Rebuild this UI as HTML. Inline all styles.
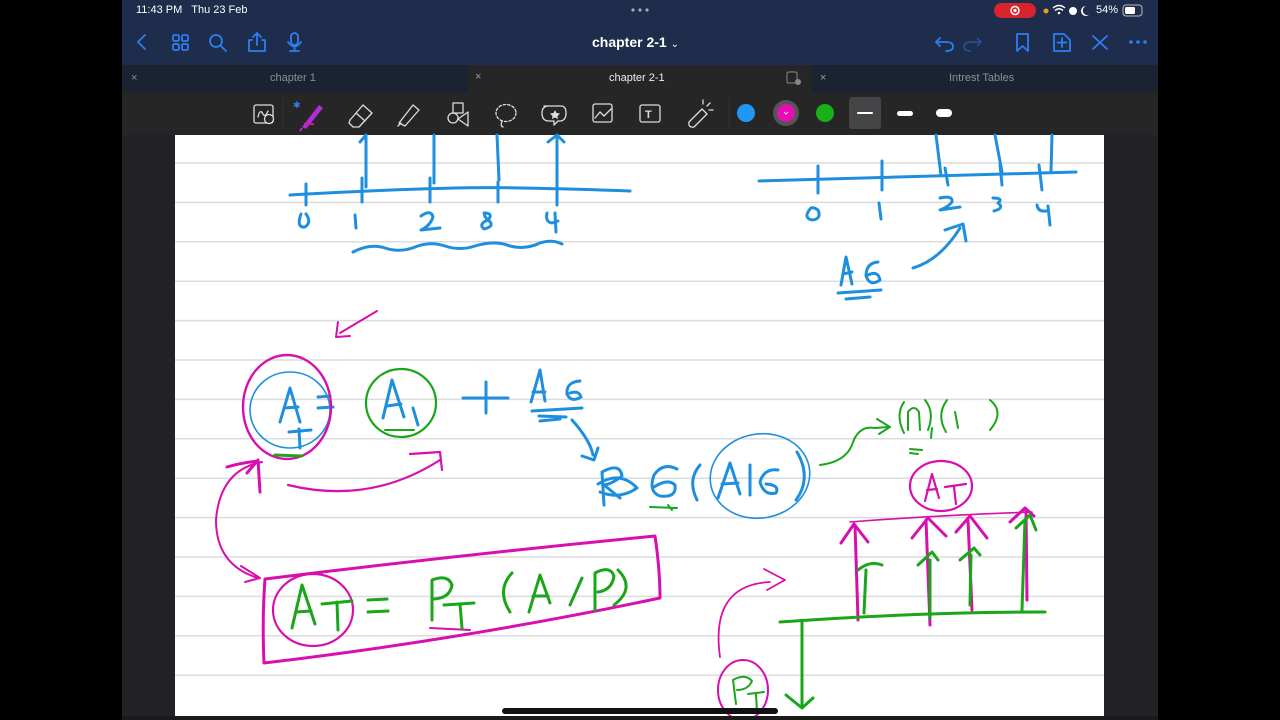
<!DOCTYPE html>
<html><head><meta charset="utf-8"><style>
*{margin:0;padding:0;box-sizing:border-box}
body{width:1280px;height:720px;background:#000;position:relative;overflow:hidden;font-family:"Liberation Sans",sans-serif}
#ipad{position:absolute;left:122px;top:0;width:1036px;height:720px;background:#222226}
#top{position:absolute;left:0;top:0;width:1036px;height:65px;background:#1d2d4b}
.t{position:absolute;color:#fff;white-space:nowrap}
#tabs{position:absolute;left:0;top:65px;width:1036px;height:27px;background:#1b2232}
#atab{position:absolute;left:346px;top:65px;width:344px;height:27px;background:#262626}
#tool{position:absolute;left:0;top:92px;width:1036px;height:43px;background:#262626}
#paper{position:absolute;left:175px;top:135px;width:929px;height:581px;background:#fff}
</style></head><body>
<div id="ipad">
<div id="top"></div>
<div id="tabs"></div><div id="atab"></div>
<div id="tool"></div>
</div>
<div class="t" style="left:136px;top:4px;font-size:11px">11:43 PM&nbsp;&nbsp; Thu 23 Feb</div>
<div class="t" style="left:592px;top:34px;font-size:14px;font-weight:bold">chapter 2-1 <span style="font-size:10px;font-weight:normal">⌄</span></div>
<div class="t" style="left:1096px;top:4px;font-size:11px">54%</div>
<div class="t" style="left:270px;top:72px;font-size:11px;color:#8a8f99">chapter 1</div>
<div class="t" style="left:131px;top:72px;font-size:11px;color:#8a8f99">×</div>
<div class="t" style="left:475px;top:71px;font-size:11px;color:#999">×</div>
<div class="t" style="left:609px;top:72px;font-size:11px;color:#eee">chapter 2-1</div>
<div class="t" style="left:820px;top:72px;font-size:11px;color:#999">×</div>
<div class="t" style="left:949px;top:72px;font-size:11px;color:#8a8f99">Intrest Tables</div>
<svg style="position:absolute;left:0;top:0" width="1280" height="135" viewBox="0 0 1280 135">
<g fill="#aaa"><circle cx="633" cy="10" r="1.6"/><circle cx="640" cy="10" r="1.6"/><circle cx="647" cy="10" r="1.6"/></g>
<rect x="994" y="3" width="42" height="15" rx="7.5" fill="#d9242e"/><circle cx="1015" cy="10.5" r="4" fill="none" stroke="#fff" stroke-width="1.5"/><circle cx="1015" cy="10.5" r="1.6" fill="#fff"/>
<circle cx="1046" cy="11" r="2.5" fill="#f29a1e"/>
<path d="M1053 8 Q1059 3 1065 8 M1055 10.5 Q1059 7 1063 10.5" stroke="#fff" stroke-width="1.4" fill="none"/><circle cx="1059" cy="13" r="1.3" fill="#fff"/>
<circle cx="1073" cy="11" r="4" fill="#fff"/><path d="M1086 6 A5 5 0 1 0 1089 15 A4 4 0 0 1 1086 6Z" fill="#fff"/>
<rect x="1123" y="5" width="19" height="11" rx="3" fill="none" stroke="#bbb" stroke-width="1"/><rect x="1125" y="7" width="10" height="7" rx="1.5" fill="#fff"/>
<g stroke="#2d7ff0" stroke-width="1.8" fill="none" stroke-linecap="round" stroke-linejoin="round">
<path d="M145 35 L138 42 L145 49"/>
<rect x="173" y="35" width="6" height="6" rx="1.5"/><rect x="182" y="35" width="6" height="6" rx="1.5"/><rect x="173" y="44" width="6" height="6" rx="1.5"/><rect x="182" y="44" width="6" height="6" rx="1.5"/>
<circle cx="216" cy="41" r="6"/><path d="M220.5 45.5 L226 51"/>
<path d="M252 40 H249 V51 H265 V40 H262 M257 45 V33 M253 37 L257 33 L261 37"/>
<rect x="291" y="33" width="7" height="12" rx="3.5"/><path d="M288 42 Q294.5 51 301 42 M294.5 47 V51 M290 51 H299"/>
<path d="M940 38 L936 42 L940 46 M936 42 H946 Q953 42 953 46.5 Q953 51 946 51"/>
<path d="M1017 34 H1028 V51 L1022.5 46 L1017 51Z"/>
<path d="M1054 34 H1064 L1070 40 V51 H1054Z M1062 38 V47 M1057.5 42.5 H1066.5"/>
<path d="M1093 36 L1107 49 M1107 36 L1093 49"/>
</g>
<path d="M977 38 L981 42 L977 46 M981 42 H971 Q964 42 964 46.5 Q964 51 971 51" stroke="#22508f" stroke-width="1.8" fill="none"/>
<g fill="#2d7ff0"><circle cx="1131" cy="42" r="1.8"/><circle cx="1138" cy="42" r="1.8"/><circle cx="1145" cy="42" r="1.8"/></g>
<rect x="787" y="72" width="10" height="11" rx="1.5" fill="none" stroke="#888" stroke-width="1"/><circle cx="798" cy="82" r="3" fill="#888"/>
<line x1="283" y1="98" x2="283" y2="130" stroke="#333"/><line x1="729" y1="98" x2="729" y2="130" stroke="#333"/>
<g stroke="#ddd" stroke-width="1.3" fill="none" stroke-linecap="round" stroke-linejoin="round">
<rect x="254" y="105" width="19" height="18" rx="2"/><circle cx="269" cy="119" r="4.5" fill="#262626"/><path d="M258 117 Q260 108 263 114 Q265 118 268 111"/>
<path d="M350 120 L363 105 L372 113 L359 127 L353 127 L349 123Z M356 113 L365 121"/>
<path d="M399 123 L413 105 L419 110 L405 126Z M398 126 L401 123"/>
<rect x="453" y="103" width="10" height="10"/><circle cx="453" cy="118" r="5"/><path d="M468 112 L468 126 L458 119Z"/>
<ellipse cx="506" cy="113" rx="10" ry="8.5" stroke-dasharray="2.5 2"/><path d="M502 121 Q500 126 503 127"/>
<path d="M544 106 H561 Q566 106 566 113 Q566 120 561 121 H558 L554 125 V121 H549 Q542 121 542 113 Q542 106 549 106"/>
<rect x="593" y="104" width="19" height="18" rx="2"/><path d="M595 118 L600 112 L604 116 L611 109"/>
<rect x="640" y="105" width="20" height="17" rx="2"/>
<path d="M689 122 L702 109 L707 114 L694 127 Q688 128 689 122Z M703 104 V100 M707 106 L710 103 M709 110 H713"/>
</g>
<path d="M555 110 L556.5 113 L560 113.5 L557.5 116 L558 119 L555 117.5 L552 119 L552.5 116 L550 113.5 L553.5 113Z" fill="#ddd"/>
<text x="645" y="118" font-family="Liberation Sans" font-size="11" font-weight="bold" fill="#ddd">T</text>
<path d="M302 127 L319 105 L323 108 L306 129Z" fill="#b02ed6"/><path d="M302 128 L300 131" stroke="#b02ed6" stroke-width="2"/><rect x="304" y="123" width="10" height="2" fill="#d419b0"/>
<text x="293" y="108" font-size="9" fill="#2d7ff0" font-family="DejaVu Sans">✱</text>
<circle cx="746" cy="113" r="9" fill="#2196f3"/>
<circle cx="786" cy="113" r="13" fill="#555"/><circle cx="786" cy="113" r="9" fill="#e40fb3"/><path d="M784 112 L786 114 L788 112" stroke="#fff" fill="none" stroke-width="0.8"/>
<circle cx="825" cy="113" r="9" fill="#19b019"/>
<rect x="849" y="97" width="32" height="32" rx="3" fill="#454548"/>
<rect x="857" y="112" width="16" height="2" rx="1" fill="#fff"/>
<rect x="897" y="111" width="16" height="5" rx="2.5" fill="#fff"/>
<rect x="936" y="109" width="16" height="8" rx="4" fill="#fff"/>
</svg>
<div id="paper"></div>
<svg style="position:absolute;left:0;top:0" width="1280" height="720" viewBox="0 0 1280 720">
<g stroke="#dcdcdc" stroke-width="1.5">
<line x1="175" y1="163" x2="1104" y2="163"/><line x1="175" y1="202.4" x2="1104" y2="202.4"/><line x1="175" y1="241.8" x2="1104" y2="241.8"/><line x1="175" y1="281.2" x2="1104" y2="281.2"/><line x1="175" y1="320.6" x2="1104" y2="320.6"/><line x1="175" y1="360" x2="1104" y2="360"/><line x1="175" y1="399.4" x2="1104" y2="399.4"/><line x1="175" y1="438.8" x2="1104" y2="438.8"/><line x1="175" y1="478.2" x2="1104" y2="478.2"/><line x1="175" y1="517.6" x2="1104" y2="517.6"/><line x1="175" y1="557" x2="1104" y2="557"/><line x1="175" y1="596.4" x2="1104" y2="596.4"/><line x1="175" y1="635.8" x2="1104" y2="635.8"/><line x1="175" y1="675.2" x2="1104" y2="675.2"/>
</g>
<g fill="none" stroke-linecap="round" stroke-linejoin="round">
<g stroke="#1e8fde" stroke-width="3">
<path d="M290 195 Q450 186 520 188 Q580 189 630 191"/>
<path d="M306 184 V205 M362 178 V202 M430 178 V202 M498 182 V202 M557 182 V205"/>
<path d="M366 187 V135 M434 183 V135 M499 180 L497 135 M557 187 V135 M360 142 L366 135 M548 142 L557 135 L564 142"/>
<path d="M301 214 Q296 228 305 227 Q312 222 306 214"/><path d="M355 215 L356 228"/>
<path d="M421 216 Q431 209 433 217 Q430 226 421 230 L440 228"/>
<path d="M484 213 Q494 213 488 220 Q496 226 484 229 Q478 224 488 220 Q482 214 486 213"/>
<path d="M547 213 Q545 222 552 223 L558 221 M555 213 L556 232"/>
<path d="M353 252 Q370 243 385 248 Q400 253 415 247 Q430 241 445 246 Q460 251 475 246 Q495 240 510 246 Q525 250 540 243 Q552 239 562 244"/>
<path d="M759 181 Q900 177 1076 172"/>
<path d="M818 166 V193 M882 161 V190 M945 168 L948 185 M1000 164 L1002 185 M1039 165 L1042 190"/>
<path d="M936 135 L941 175 M995 135 L1002 172 M1052 135 L1051 172"/>
<path d="M810 209 Q803 218 812 220 Q822 219 818 210 Q812 206 810 209"/><path d="M879 203 L881 219"/>
<path d="M940 198 Q953 195 952 202 Q948 207 940 210 L960 207"/>
<path d="M993 198 Q1004 198 998 203 Q1005 208 994 211"/>
<path d="M1037 205 Q1038 212 1046 211 M1048 206 L1050 225"/>
<path d="M913 268 Q940 260 960 228 M945 230 L963 224 L966 241"/>
<path d="M841 285 L846 257 L852 284 M843 274 L852 272 M878 262 Q866 263 866 276 Q870 287 880 280 Q878 270 868 275"/>
<path d="M838 293 L881 290 M846 299 L870 297"/>
<ellipse cx="290" cy="410" rx="40" ry="38" stroke-width="1.6"/>
<path d="M280 422 L290 388 L300 422 M284 408 L298 407 M289 432 L311 430 M299 429 L300 448"/>
<path d="M318 397 L330 396 M318 408 L333 407"/>
<path d="M383 418 L392 380 L404 417 M387 406 L401 404 M413 408 L418 425"/>
<path d="M463 398 L508 398 M486 382 L486 413"/>
<path d="M531 402 L540 370 L545 401 M533 392 L545 392 M580 381 Q566 382 567 394 Q571 403 581 397 Q579 390 570 393"/>
<path d="M532 411 L582 408 M539 416 L566 417 M540 421 L560 419"/>
<path d="M572 420 Q590 440 593 455 M582 456 L594 460 L598 448"/>
<path d="M604 505 L602 472 Q620 462 622 476 Q612 484 604 485 L620 498 M598 484 Q620 470 637 488 Q620 500 600 492"/>
<path d="M677 469 Q663 462 654 475 Q648 492 660 496 Q677 498 675 485 Q668 478 654 487"/>
<path d="M700 465 Q687 480 697 500"/>
<path d="M718 498 L730 463 L740 494 M722 484 L738 483"/>
<path d="M750 465 L750 495 M778 470 Q764 468 760 482 Q764 496 776 493 Q780 485 766 484"/>
<path d="M797 452 Q812 478 796 500"/>
<ellipse cx="760" cy="476" rx="50" ry="42" stroke-width="1.6" transform="rotate(-10 760 476)"/>
</g>
<g stroke="#d60fae" stroke-width="3">
<path d="M377 311 L340 333 M338 322 L336 337 L350 336" stroke-width="2"/>
<ellipse cx="287" cy="407" rx="44" ry="52" stroke-width="2.4"/>
<path d="M227 467 Q240 463 258 461 M247 473 L258 460 L260 492"/>
<path d="M262 462 Q220 470 216 520 Q216 565 258 578 M241 566 L260 578 L245 582" stroke-width="2"/>
<path d="M288 485 Q370 505 440 460 M410 454 L440 452 L442 470" stroke-width="2.2"/>
<path d="M265 579 Q460 555 655 536 Q660 570 660 598 Q460 640 264 663 Q262 620 265 579Z" stroke-width="3"/>
<ellipse cx="313" cy="610" rx="40" ry="36" stroke-width="2.2"/>
<path d="M430 628 L470 630" stroke-width="2"/>
<ellipse cx="941" cy="486" rx="31" ry="25" stroke-width="2.2"/>
<path d="M925 501 L932 474 L939 498 M927 490 L937 489 M945 487 L966 484 M954 487 L956 504" stroke-width="2.2"/>
<path d="M850 522 Q940 515 1032 512" stroke-width="1.6"/>
<path d="M858 620 L855 525 M841 543 L854 524 L868 542"/>
<path d="M930 625 L926 520 M912 538 L928 518 L946 536"/>
<path d="M972 610 L968 520 M956 532 L970 516 L987 538"/>
<path d="M1027 600 L1026 510 M1010 522 L1025 508 L1034 516"/>
<path d="M720 657 Q710 585 770 582 M764 569 L785 580 L767 590" stroke-width="1.8"/>
<ellipse cx="743" cy="690" rx="25" ry="30" stroke-width="2"/>
</g>
<g stroke="#1aa51a" stroke-width="3">
<ellipse cx="401" cy="403" rx="35" ry="34" stroke-width="2.2"/>
<path d="M385 430 L414 430" stroke-width="2"/>
<path d="M275 455 L302 456"/>
<path d="M650 507 L677 508 M668 505 L672 510" stroke-width="2"/>
<path d="M820 465 Q845 462 852 445 Q858 425 875 428 L888 427 M877 419 L890 427 L879 434" stroke-width="2"/>
<path d="M904 433 Q895 415 904 402 M908 430 L908 412 Q914 404 919 412 L920 430 M925 400 Q935 412 928 430 M932 428 L931 438 M946 432 Q936 415 947 400 M955 412 L958 428 M990 400 Q1005 412 990 430 M910 449 L922 450 M910 453 L918 454" stroke-width="2"/>
<path d="M292 628 L302 585 L315 624 M296 612 L311 611 M322 604 L352 601 M337 602 L338 630"/>
<path d="M368 600 L387 599 M368 612 L388 611"/>
<path d="M432 620 L432 580 Q448 574 452 585 Q450 598 434 599 M444 605 L474 603 M460 604 L462 628"/>
<path d="M512 573 Q496 590 510 612 M529 612 L540 575 L550 603 M533 596 L548 596 M570 605 L582 578 M595 610 L595 573 Q610 565 614 576 Q612 590 598 592 M618 570 Q636 588 614 605"/>
<path d="M780 622 Q920 612 1045 612"/>
<path d="M802 622 L802 706 M786 695 L802 708 L813 698"/>
<path d="M864 613 L866 570 M858 570 Q870 560 882 565"/>
<path d="M930 618 L930 560 M918 565 L932 552 L938 560"/>
<path d="M970 605 L971 555 M960 560 L974 548 L980 555"/>
<path d="M1022 610 L1025 520 M1016 528 L1030 515 L1036 530"/>
<path d="M736 704 L733 680 Q745 673 752 681 Q748 690 737 690 M748 694 L764 692 M756 694 L757 712" stroke-width="2"/>
</g>
</g>
<rect x="502" y="708" width="276" height="6" rx="3" fill="#111"/>
<rect x="122" y="716" width="1036" height="4" fill="#1a1a1a"/>
</svg>
</body></html>
